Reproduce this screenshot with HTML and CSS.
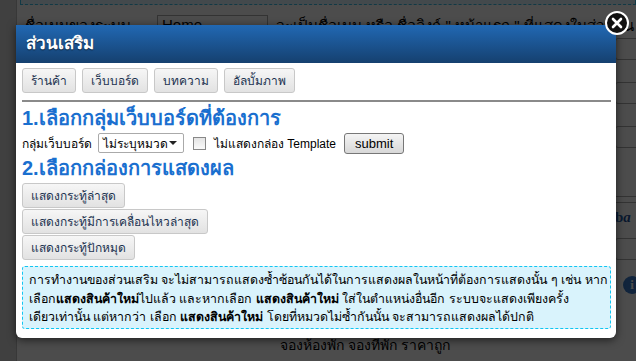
FILE: index.html
```html
<!DOCTYPE html>
<html lang="th">
<head>
    <meta charset="UTF-8">
    <title>ส่วนเสริม</title>
    <link rel="stylesheet" href="styles.css">
</head>
<body>
    <!-- page behind the dialog -->
    <div class="page">
        <div class="side"></div>
        <div class="main">
            <div class="note-top"></div>
            <div class="form-row">
                <span class="form-label">ชื่อเมนูของระบบ</span>
                <span class="form-input">Home</span>
                <span class="form-help">จะเป็นชื่อเมนู หรือ ชื่อลิงก์ " หน้าแรก " ที่แสดงในส่วนบน</span>
            </div>
            <div class="right-col">
                <div class="rbox"></div>
                <div class="rbox"></div>
                <div class="rbox"></div>
                <div class="rline"></div>
                <div class="ricon">b<i>a</i></div>
                <div class="rbox"></div>
                <div class="rinfo">i</div>
            </div>
            <div class="footer-text">จองห้องพัก จองที่พัก ราคาถูก</div>
        </div>
        <div class="overlay"></div>
    </div>

    <!-- dialog -->
    <div class="dialog">
        <div class="dialog-head">ส่วนเสริม</div>
        <div class="dialog-body">
            <div class="tabs">
                <button class="btn">ร้านค้า</button>
                <button class="btn">เว็บบอร์ด</button>
                <button class="btn">บทความ</button>
                <button class="btn">อัลบั้มภาพ</button>
            </div>
            <hr>
            <h2>1.เลือกกลุ่มเว็บบอร์ดที่ต้องการ</h2>
            <div class="group-row">
                <span>กลุ่มเว็บบอร์ด</span>
                <span class="select">ไม่ระบุหมวด <span class="caret"></span></span>
                <span class="check"></span>
                <span>ไม่แสดงกล่อง Template</span>
                <button class="submit">submit</button>
            </div>
            <h2>2.เลือกกล่องการแสดงผล</h2>
            <div class="box-list">
                <button class="btn">แสดงกระทู้ล่าสุด</button>
                <button class="btn">แสดงกระทู้มีการเคลื่อนไหวล่าสุด</button>
                <button class="btn">แสดงกระทู้ปักหมุด</button>
            </div>
            <div class="info">
                การทำงานของส่วนเสริม จะไม่สามารถแสดงซ้ำซ้อนกันได้ในการแสดงผลในหน้าที่ต้องการแสดงนั้น ๆ เช่น หาก<br>
                เลือก<b>แสดงสินค้าใหม่</b>ไปแล้ว และหากเลือก <b>แสดงสินค้าใหม่</b> ใส่ในตำแหน่งอื่นอีก ระบบจะแสดงเพียงครั้ง<br>
                เดียวเท่านั้น แต่หากว่า เลือก <b>แสดงสินค้าใหม่</b> โดยที่หมวดไม่ซ้ำกันนั้น จะสามารถแสดงผลได้ปกติ
            </div>
        </div>
        <div class="close">
            <svg width="12" height="12" viewBox="0 0 12 12">
                <path d="M2 2 L10 10 M10 2 L2 10" stroke="#fff" stroke-width="2.6" stroke-linecap="round"/>
            </svg>
        </div>
    </div>
</body>
</html>
```

FILE: styles.css
```css
body {
    margin: 0;
    font-family: Tahoma, "Liberation Sans", "DejaVu Sans", sans-serif;
    font-size: 13px;
    overflow: hidden;
}

/* background page */
.page {
    position: relative;
    display: flex;
    width: 636px;
    height: 361px;
    background: #fff;
}

.side {
    width: 16px;
    background: #d8d8d8;
    border-right: 1px solid #bbb;
}

.main {
    flex: 1;
    position: relative;
}

.note-top {
    margin-left: 3px;
    height: 4px;
    background: #e2f6fd;
    border: 1px dashed #3cc0e6;
    border-top: none;
}

.form-row {
    display: flex;
    align-items: center;
    gap: 8px;
    padding: 9px 0 0 8px;
    color: #000;
    white-space: nowrap;
}

.form-label {
    width: 124px;
    font-size: 15px;
}

.form-input {
    width: 105px;
    height: 20px;
    padding-left: 4px;
    border: 1px solid #aaa;
    font-size: 15px;
}

.form-help {
    font-size: 15px;
}

.right-col {
    position: absolute;
    top: 38px;
    left: 598px;
    width: 30px;
    display: flex;
    flex-direction: column;
    gap: 22px;
}

.rbox {
    height: 20px;
    border: 1px solid #aaa;
    border-radius: 3px;
    background: #fff;
}

.rline {
    height: 5px;
    border-top: 1px solid #aaa;
    border-bottom: 1px solid #aaa;
    margin-top: 26px;
    margin-bottom: -10px;
}

.ricon {
    font: bold 15px "Liberation Serif", serif;
    color: #1f5fa8;
    margin: -6px 0 -10px;
}

.ricon i {
    color: #1f4f98;
}

.rinfo {
    width: 18px;
    height: 18px;
    margin: -6px 0 0 8px;
    border-radius: 50%;
    background: #3a7bc8;
    color: #fff;
    font: bold 13px "Liberation Serif", serif;
    text-align: center;
    line-height: 18px;
}

.footer-text {
    position: absolute;
    top: 334px;
    left: 263px;
    color: #000;
    font-size: 14px;
}

.overlay {
    position: absolute;
    inset: 0;
    background: rgba(0, 0, 0, 0.7);
}

/* dialog */
.dialog {
    position: absolute;
    top: 25px;
    left: 16px;
    width: 600px;
    background: #fff;
    border-radius: 0 0 6px 6px;
    box-shadow: 0 2px 8px rgba(0, 0, 0, 0.6);
}

.dialog-head {
    height: 38px;
    padding-left: 10px;
    line-height: 38px;
    background: linear-gradient(#2168b3, #15406f);
    color: #fff;
    font-size: 17px;
    font-weight: bold;
    text-shadow: 0 1px 1px rgba(0, 0, 0, 0.6);
}

.dialog-body {
    padding: 5px 5px 9px 6px;
}

.close {
    position: absolute;
    top: -14px;
    right: -13px;
    display: flex;
    align-items: center;
    justify-content: center;
    width: 20px;
    height: 20px;
    border: 2px solid #fff;
    border-radius: 50%;
    background: #111;
}

.btn {
    height: 25px;
    padding: 0 8px;
    border: 1px solid #c8c8c8;
    border-radius: 3px;
    background: linear-gradient(#f6f6f6, #e2e2e2);
    color: #1c3350;
    font-family: inherit;
    font-size: 12px;
}

.tabs {
    display: flex;
    gap: 6px;
}

hr {
    margin: 7px 0 0;
    border: none;
    border-top: 2px solid #8a8a8a;
    width: 589px;
}

h2 {
    margin: 0;
    color: #1a6fcf;
    font-size: 20px;
    line-height: 26px;
}

hr + h2 {
    margin-top: 3px;
}

.group-row {
    display: flex;
    align-items: center;
    gap: 4px;
    height: 24px;
    color: #000;
    font-size: 12px;
}

.select {
    display: inline-flex;
    align-items: center;
    justify-content: space-between;
    width: 74px;
    height: 18px;
    padding: 0 6px 0 4px;
    margin-left: 2px;
    border: 1px solid #aaa;
    border-radius: 2px;
    font-size: 12px;
}

.caret {
    border-left: 4px solid transparent;
    border-right: 4px solid transparent;
    border-top: 4px solid #222;
}

.check {
    width: 11px;
    height: 11px;
    margin: 0 4px 0 5px;
    border: 1px solid #888;
    background: linear-gradient(#e4e4e4, #fafafa);
}

.submit {
    height: 21px;
    margin-left: 4px;
    padding: 0 10px;
    border: 1px solid #777;
    border-radius: 3px;
    background: linear-gradient(#f4f4f4, #d8d8d8);
    font-family: "Liberation Sans", sans-serif;
    font-size: 13px;
}

.box-list {
    display: flex;
    flex-direction: column;
    align-items: flex-start;
    gap: 1px;
    margin-top: 2px;
}

.info {
    margin-top: 6px;
    width: 575px;
    padding: 4px 6px 1px;
    border: 1px dashed #10c6f2;
    border-radius: 3px;
    background: #d9f3fc;
    color: #000;
    font-size: 12.4px;
    line-height: 18.5px;
    white-space: nowrap;
}
```
